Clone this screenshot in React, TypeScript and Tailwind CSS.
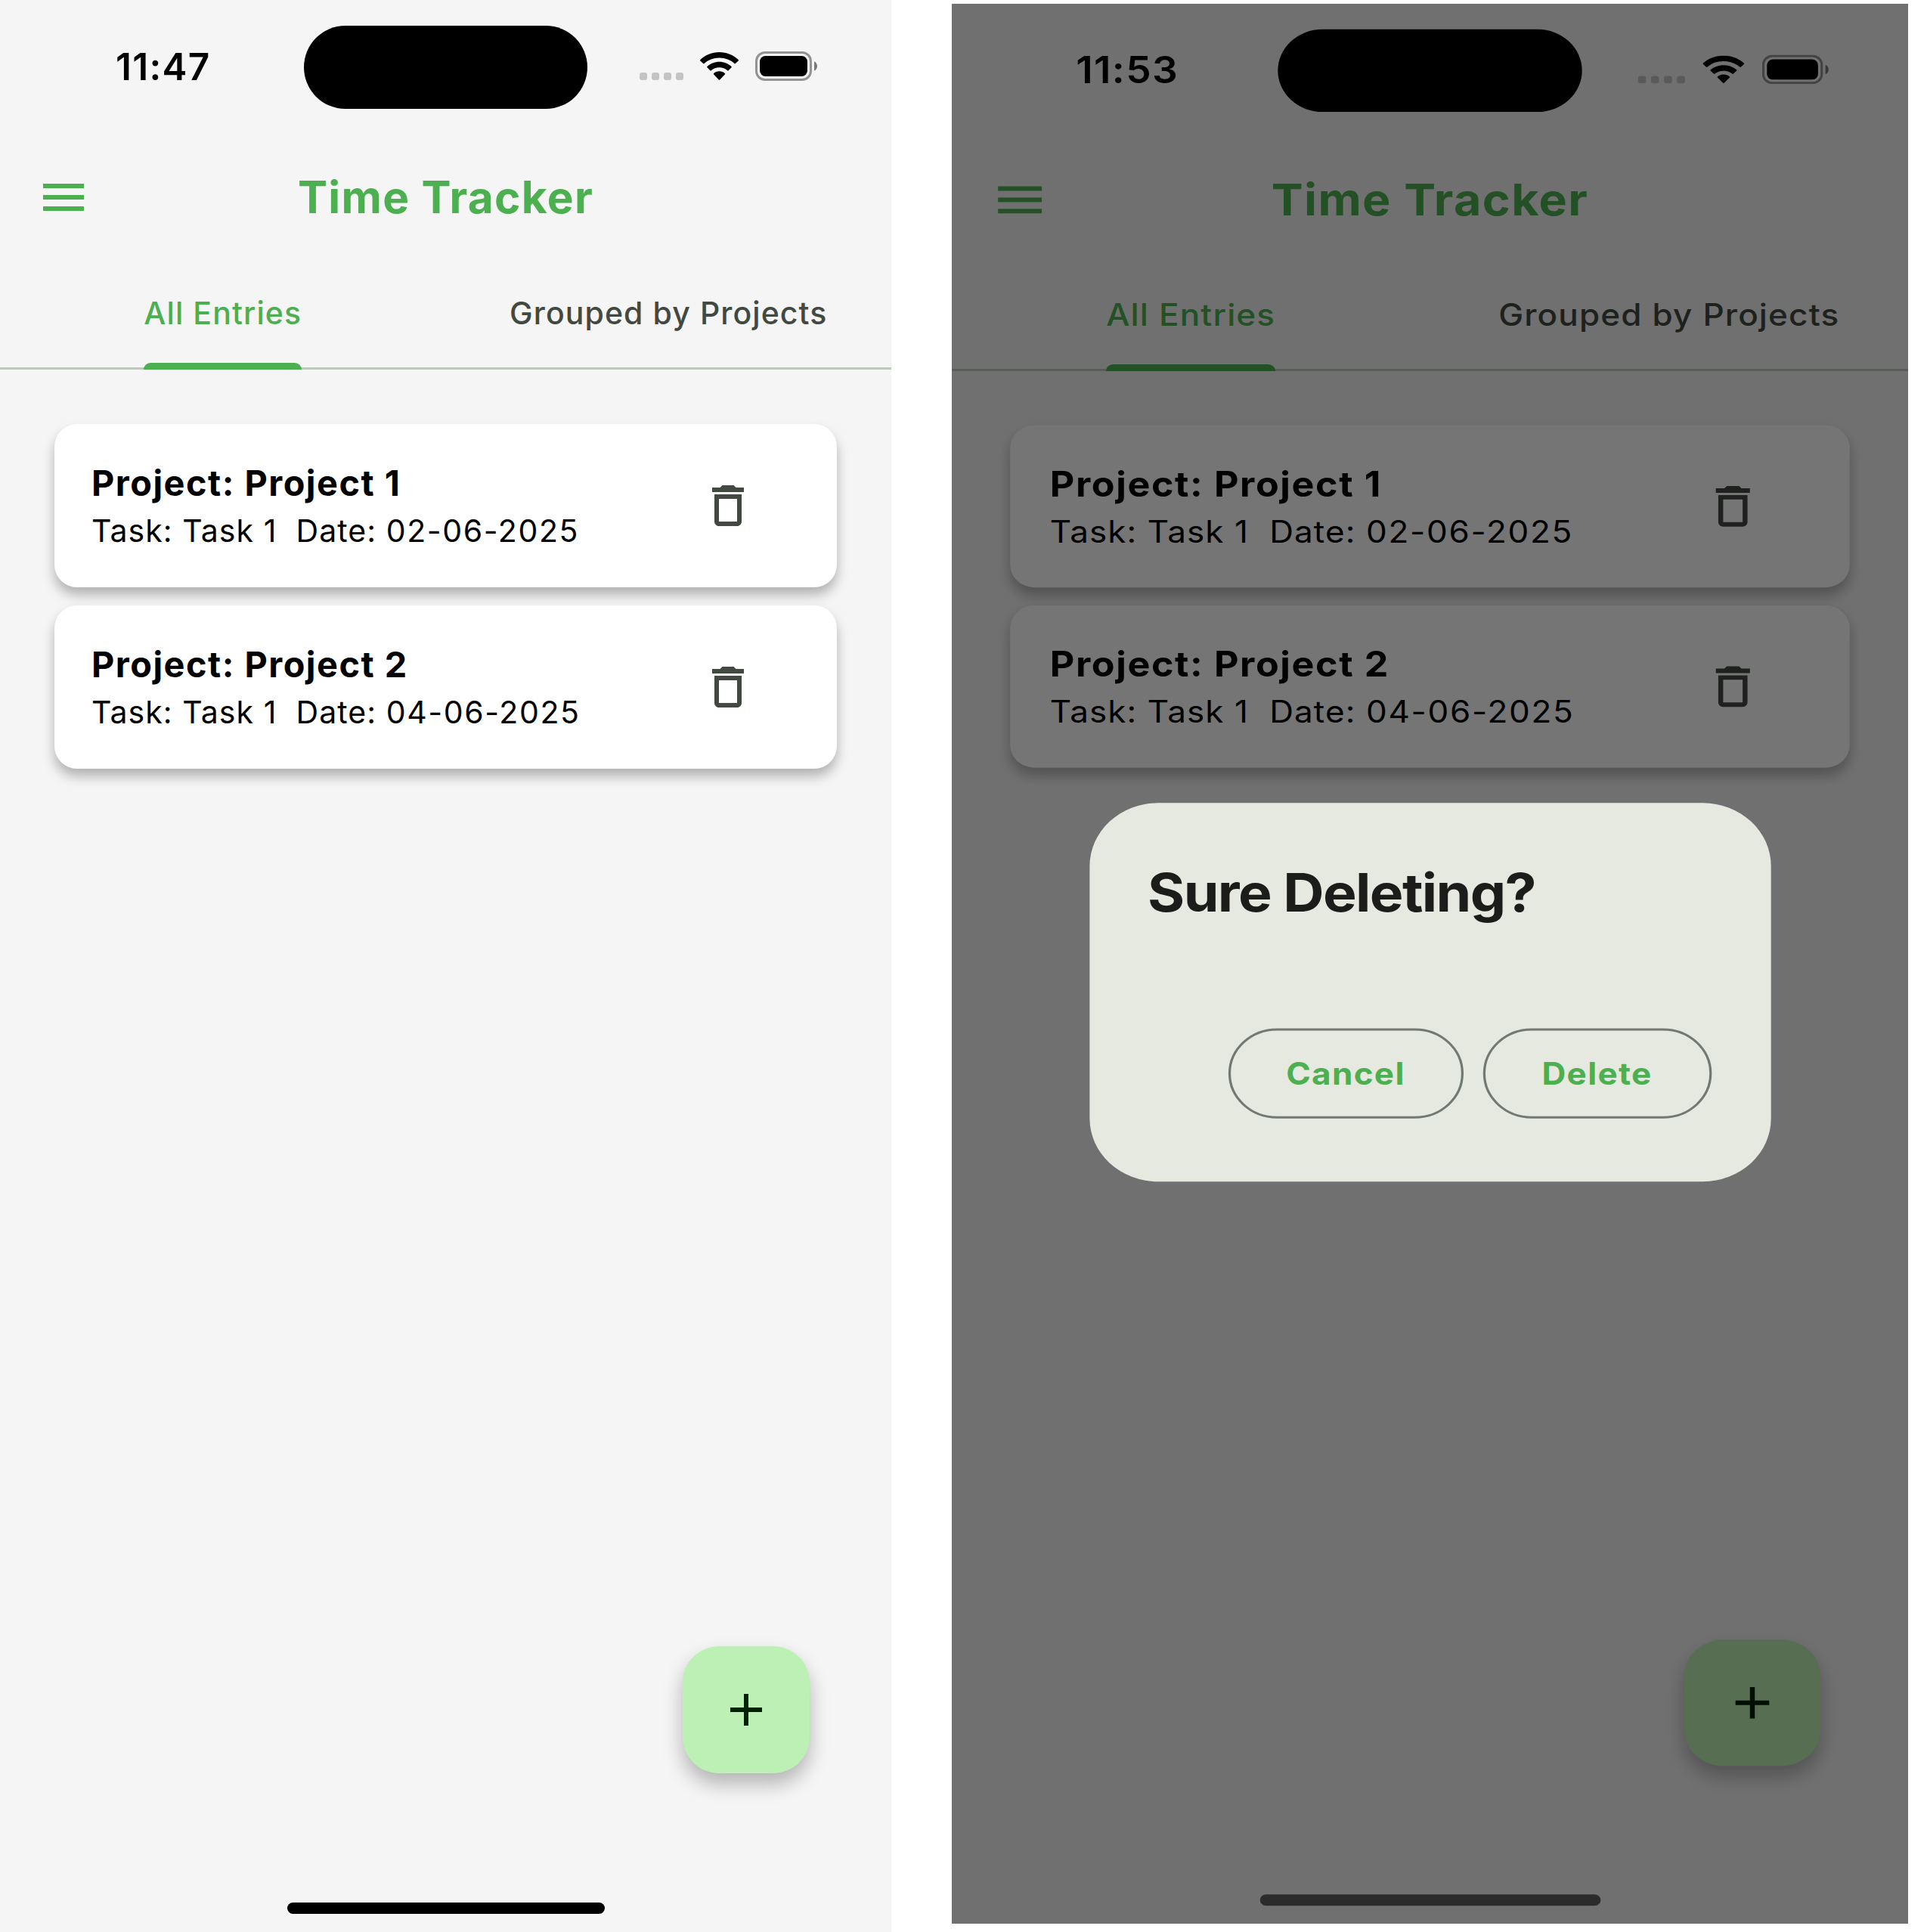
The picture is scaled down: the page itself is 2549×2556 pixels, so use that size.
import type { ReactNode } from "react";

const entries = [
  { project: "Project 1", task: "Task 1", date: "02-06-2025" },
  { project: "Project 2", task: "Task 1", date: "04-06-2025" },
];

function WifiIcon() {
  return (
    <svg viewBox="0 0 51 38" className="h-[38px] w-[51px] shrink-0">
      <path d="M25.5 0C35.2 0 44 3.8 50.6 10a.9.9 0 0 1 0 1.4L46.9 15.1a1 1 0 0 1-1.4 0A29 29 0 0 0 25.5 7.6 29 29 0 0 0 5.5 15.1a1 1 0 0 1-1.4 0L.4 11.4a.9.9 0 0 1 0-1.4C7 3.8 15.8 0 25.5 0z" />
      <path d="M25.5 12.7c6.2 0 11.8 2.4 16 6.2a1 1 0 0 1 0 1.4l-3.8 3.9a1 1 0 0 1-1.4 0c-2.9-2.5-6.7-4-10.8-4s-7.9 1.5-10.8 4a1 1 0 0 1-1.4 0l-3.8-3.9a1 1 0 0 1 0-1.4c4.2-3.8 9.8-6.2 16-6.2z" />
      <path d="M25.5 25.2c2.8 0 5.3 1 7.3 2.7a1 1 0 0 1 0 1.5l-6.6 7.1a1 1 0 0 1-1.4 0l-6.6-7.1a1 1 0 0 1 0-1.5c2-1.7 4.5-2.7 7.3-2.7z" />
    </svg>
  );
}

function BatteryIcon() {
  return (
    <svg viewBox="0 0 82 39" className="h-[39px] w-[82px] shrink-0">
      <rect x="1.5" y="1.5" width="72" height="36" rx="11.5" fill="none" stroke="#000" strokeOpacity=".4" strokeWidth="3" />
      <rect x="6" y="6" width="63" height="27" rx="7.5" />
      <path d="M78 13.2v12.6c2.4-1 4-3.5 4-6.3s-1.6-5.3-4-6.3z" fillOpacity=".5" />
    </svg>
  );
}

function StatusBar({ time }: { time: string }) {
  return (
    <div className="flex h-[177px] items-start">
      <div className="w-[402px] pt-[58px] pl-[153px] text-[49.5px] leading-[60px] font-semibold tracking-[1.3px] text-black">
        {time}
      </div>
      <div className="mt-[34px] h-[110px] w-[375px] rounded-full bg-black" />
      <div className="mt-[68px] ml-[69px] flex h-[39px] items-start">
        <div className="flex gap-[6px] pt-[28px]">
          {[0, 1, 2, 3].map((i) => (
            <span key={i} className="h-[10px] w-[10px] rounded-[3px] bg-black/20" />
          ))}
        </div>
        <div className="ml-[22px] pt-px">
          <WifiIcon />
        </div>
        <div className="ml-[22px]">
          <BatteryIcon />
        </div>
      </div>
    </div>
  );
}

function DeleteIcon() {
  return (
    <svg viewBox="0 0 24 24" className="h-[72px] w-[72px]" fill="#424940">
      <path d="M6 19c0 1.1.9 2 2 2h8c1.1 0 2-.9 2-2V7H6v12zM8 9h8v10H8V9zm7.5-5l-1-1h-5l-1 1H5v2h14V4h-3.5z" />
    </svg>
  );
}

function EntryCard({ project, task, date }: { project: string; task: string; date: string }) {
  return (
    <li className="flex h-[216px] items-center rounded-[30px] bg-white pr-[108px] pl-[49px] shadow-[0_10px_16px_rgba(0,0,0,0.28)]">
      <div className="flex-1 whitespace-pre text-black">
        <div className="text-[46.8px] leading-[66px] font-bold tracking-[1.5px]">Project: {project}</div>
        <div className="text-[41px] leading-[60px] tracking-[1.05px]">
          {`Task: ${task}  Date: `}
          <span className="tracking-[1.6px]">{date}</span>
        </div>
      </div>
      <button aria-label="Delete entry">
        <DeleteIcon />
      </button>
    </li>
  );
}

function Screen({ time, dialog }: { time: string; dialog?: ReactNode }) {
  return (
    <div className="relative flex h-[2556px] w-[1179px] flex-col bg-[#f5f5f5]">
      <StatusBar time={time} />
      <header className="flex h-[168px] items-center">
        <button aria-label="Menu" className="ml-[57px] flex w-[54px] flex-col gap-[9px]">
          <span className="h-[6px] bg-[#4caf50]" />
          <span className="h-[6px] bg-[#4caf50]" />
          <span className="h-[6px] bg-[#4caf50]" />
        </button>
        <h1 className="mr-[111px] flex-1 text-center text-[58.5px] leading-[72px] font-bold tracking-[1.3px] text-[#4caf50]">
          Time Tracker
        </h1>
      </header>
      <nav className="flex h-[144px] border-b-[3px] border-[#c1c9bd] text-[41px] leading-[60px] font-[450] tracking-[1.08px]">
        <div className="flex w-1/2 justify-center">
          <div className="relative h-[144px] pt-[39px] text-[#4caf50]">
            All Entries
            <span className="absolute right-0 bottom-0 left-0 h-[9px] rounded-t-[9px] bg-[#4caf50]" />
          </div>
        </div>
        <div className="flex w-1/2 justify-center pt-[39px] text-[#424940]">Grouped by Projects</div>
      </nav>
      <ul className="flex flex-col gap-[24px] px-[72px] pt-[72px]">
        {entries.map((e) => (
          <EntryCard key={e.project} {...e} />
        ))}
      </ul>
      <div className="mt-auto flex justify-end pr-[108px] pb-[171px]">
        <button
          aria-label="Add entry"
          className="flex h-[168px] w-[168px] items-center justify-center rounded-[48px] bg-[#bdf0b4] shadow-[0_14px_26px_rgba(0,0,0,0.27)]"
        >
          <svg viewBox="0 0 42 42" className="h-[42px] w-[42px]" fill="#002204">
            <path d="M18 0h6v18h18v6H24v18h-6V24H0v-6h18z" />
          </svg>
        </button>
      </div>
      {dialog && (
        <div className="absolute inset-0 flex items-center justify-center bg-black/54 pt-[177px] pb-[102px]">{dialog}</div>
      )}
      <div className="relative mb-[24px] flex justify-center">
        <div className={`h-[15px] w-[420px] rounded-full ${dialog ? "bg-[#2b2b2b]" : "bg-black"}`} />
      </div>
    </div>
  );
}

function DialogButton({ children, className }: { children: ReactNode; className: string }) {
  return (
    <button
      className={`flex h-[120px] items-center justify-center rounded-full border-[3px] border-[#727970] text-[41px] leading-[60px] font-bold tracking-[1.25px] text-[#4caf50] ${className}`}
    >
      {children}
    </button>
  );
}

function DeleteDialog() {
  return (
    <div className="flex h-[504px] w-[840px] flex-col justify-between rounded-[84px] bg-[#e6e9e0] pt-[72px] pr-[73px] pb-[84px] pl-[72px]">
      <h2 className="text-[70px] leading-[96px] font-bold tracking-[-1.5px] whitespace-nowrap text-[#1c1c1a]">
        Sure Deleting?
      </h2>
      <div className="flex justify-end gap-[24px]">
        <DialogButton className="w-[290px]">Cancel</DialogButton>
        <DialogButton className="w-[282px]">Delete</DialogButton>
      </div>
    </div>
  );
}

export default function App() {
  return (
    <main className="flex h-[2556px] w-[2549px] overflow-hidden bg-white font-['Inter',sans-serif]">
      <Screen time="11:47" />
      <div className="mt-[5px] ml-[80px] h-[2540px] w-[1265px]">
        <div className="h-[2556px] w-[1179px] origin-top-left scale-x-[1.07294] scale-y-[0.99374]">
          <Screen time="11:53" dialog={<DeleteDialog />} />
        </div>
      </div>
    </main>
  );
}
